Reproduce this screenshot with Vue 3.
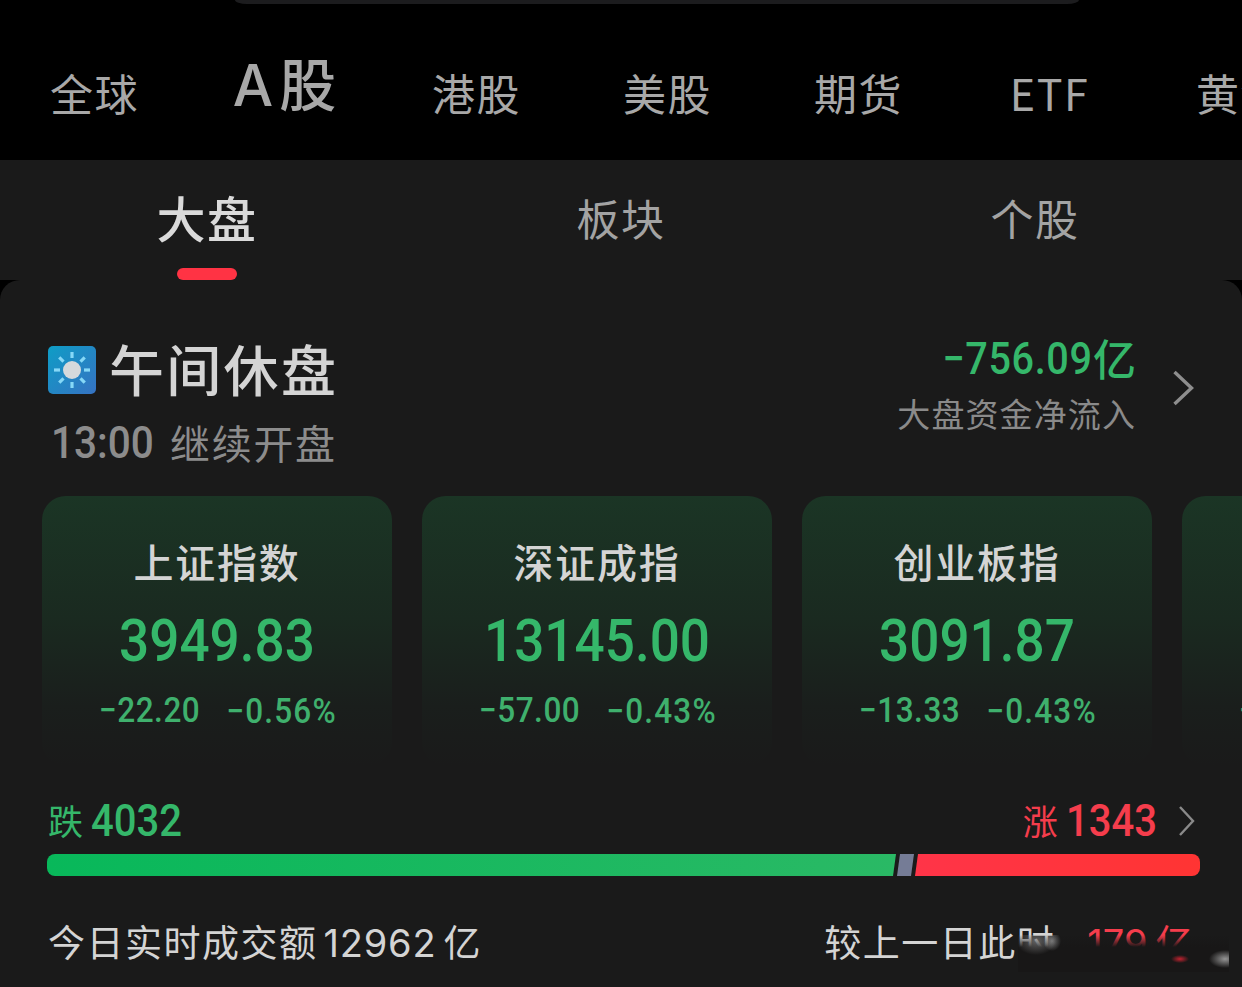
<script setup>
import { ref } from 'vue'

const markets = ['全球', 'A股', '港股', '美股', '期货', 'ETF', '黄金']
const activeMarket = ref('A股')

const sections = ['大盘', '板块', '个股']
const activeSection = ref('大盘')

const indexes = [
  { name: '上证指数', price: '3949.83', change: '−22.20', percent: '−0.56%' },
  { name: '深证成指', price: '13145.00', change: '−57.00', percent: '−0.43%' },
  { name: '创业板指', price: '3091.87', change: '−13.33', percent: '−0.43%' },
  { name: '', price: '', change: '−10.00', percent: '−0.70%' }
]

const rays = [0, 45, 90, 135, 180, 225, 270, 315]
</script>

<template>
  <div class="page">
    <div class="search-edge" />
    <nav class="markets">
      <a
        v-for="m in markets"
        :key="m"
        class="market"
        :class="{ active: m === activeMarket }"
        @click="activeMarket = m"
      >{{ m }}</a>
    </nav>

    <nav class="sections">
      <a
        v-for="s in sections"
        :key="s"
        class="section"
        :class="{ active: s === activeSection }"
        @click="activeSection = s"
      >{{ s }}</a>
    </nav>

    <div class="panel-wrap">
      <main class="panel">
        <header class="status">
          <div class="status-left">
            <div class="status-title">
              <svg class="sun" viewBox="0 0 48 48">
                <defs>
                  <linearGradient id="sky" x1="0" y1="0" x2="1" y2="1">
                    <stop offset="0" stop-color="#0e9dc6" />
                    <stop offset="1" stop-color="#3672c2" />
                  </linearGradient>
                </defs>
                <rect width="48" height="48" rx="5" fill="url(#sky)" />
                <circle cx="24" cy="24" r="9" fill="#d6d9dc" />
                <path
                  v-for="r in rays"
                  :key="r"
                  d="M24 6v6"
                  stroke="#86d8f7"
                  stroke-width="3.2"
                  :transform="`rotate(${r} 24 24)`"
                />
              </svg>
              <span>午间休盘</span>
            </div>
            <div class="status-sub">
              <span class="num time">13:00</span>
              <span class="resume">继续开盘</span>
            </div>
          </div>
          <div class="flow">
            <div class="flow-value"><span class="num">−756.09</span><span class="unit">亿</span></div>
            <div class="flow-label">大盘资金净流入</div>
          </div>
          <svg class="arrow" width="22" height="38" viewBox="0 0 22 38">
            <path d="M2.5 3l17 16-17 16" fill="none" stroke="#8e8e8e" stroke-width="3.4" />
          </svg>
        </header>

        <section class="cards">
          <article v-for="(item, i) in indexes" :key="i" class="card">
            <div class="card-name">{{ item.name }}</div>
            <div class="card-price num">{{ item.price }}</div>
            <div class="card-change num">
              <span>{{ item.change }}</span>
              <span class="percent">{{ item.percent }}</span>
            </div>
          </article>
        </section>

        <section class="breadth">
          <div class="counts">
            <span class="count down"><span class="label">跌</span><b class="num">4032</b></span>
            <span class="count up"><span class="label">涨</span><b class="num">1343</b></span>
            <svg class="count-arrow" width="18" height="32" viewBox="0 0 18 32">
              <path d="M2 2l13 14L2 30" fill="none" stroke="#8a8a8a" stroke-width="2.4" />
            </svg>
          </div>
          <div class="bar">
            <i class="bar-down" />
            <i class="bar-flat" />
            <i class="bar-up" />
          </div>
        </section>

        <footer class="turnover">
          <span>今日实时成交额<em>12962</em>亿</span>
          <span class="compare">较上一日此时<span class="diff"><em>179</em>亿</span><i class="smear" /></span>
        </footer>
      </main>
    </div>
  </div>
</template>

<style>
body {
  margin: 0;
  background: #000;
}
</style>

<style scoped>
.page {
  width: 1242px;
  height: 987px;
  overflow: hidden;
  background: #000;
  color: #d4d4d4;
  font-family: "Noto Sans CJK SC", sans-serif;
}

.num {
  font-family: Roboto, sans-serif;
  font-weight: 500;
}

.search-edge {
  width: 844px;
  height: 4px;
  margin-left: 235px;
  background: #1c1c1e;
  border-radius: 0 0 12px 12px / 0 0 4px 4px;
}

.markets {
  display: flex;
  height: 156px;
  padding-top: 58px;
  box-sizing: border-box;
}

.market {
  flex: 0 0 191px;
  font-size: 43px;
  line-height: 60px;
  letter-spacing: 1.5px;
  text-align: center;
  color: #a8a8a8;
}

.market:first-child {
  margin-left: -1px;
}

.market.active {
  margin-top: -6px;
  font-family: Inter, "Noto Sans CJK SC", sans-serif;
  font-size: 57px;
  font-weight: 500;
  letter-spacing: 6px;
  text-indent: 4px;
}

.sections {
  display: flex;
  height: 120px;
  padding-top: 27px;
  box-sizing: border-box;
  background: #1a1a1a;
}

.section {
  flex: 1;
  display: flex;
  flex-direction: column;
  align-items: center;
  font-size: 43px;
  line-height: 60px;
  letter-spacing: 1.5px;
  color: #a3a3a3;
}

.section.active {
  font-size: 49px;
  font-weight: 500;
  color: #dadada;
}

.section.active::after {
  content: "";
  width: 60px;
  height: 12px;
  margin-top: 21px;
  border-radius: 6px;
  background: #ff3344;
}

.panel {
  height: 707px;
  padding-top: 54px;
  box-sizing: border-box;
  border-radius: 20px 20px 0 0;
  background: #1a1a1a;
}

.status {
  display: flex;
  height: 130px;
  padding: 0 48px;
}

.status-title {
  display: flex;
  align-items: center;
  gap: 13px;
  height: 67px;
  font-size: 55px;
  line-height: 67px;
  font-weight: 500;
  letter-spacing: 2.3px;
}

.sun {
  width: 48px;
  height: 48px;
  margin-top: 5px;
}

.status-sub {
  display: flex;
  align-items: center;
  height: 44px;
  margin-top: 19px;
  color: #8c8c8c;
}

.time {
  width: 119px;
  margin-left: 3px;
  font-size: 45px;
  transform: scaleX(0.9);
  transform-origin: left;
}

.resume {
  font-size: 40px;
  line-height: 46px;
  letter-spacing: 1.7px;
}

.flow {
  margin-left: auto;
  text-align: right;
}

.flow-value {
  display: flex;
  justify-content: flex-end;
  height: 50px;
  line-height: 50px;
  color: #35b76a;
}

.flow-value .num {
  font-size: 45px;
  letter-spacing: 0.7px;
  transform: scaleX(0.88);
  transform-origin: right;
}

.flow-value .unit {
  font-size: 43px;
  line-height: 46px;
  font-weight: 500;
}

.flow-label {
  margin-top: 7px;
  font-size: 33px;
  line-height: 44px;
  letter-spacing: 1.1px;
  color: #8a8a8a;
}

.arrow {
  margin: 35px 0 0 36px;
}

.cards {
  display: flex;
  gap: 30px;
  margin: 32px 0 0 42px;
}

.card {
  flex: 0 0 350px;
  height: 270px;
  padding-top: 39px;
  box-sizing: border-box;
  border-radius: 24px;
  background: linear-gradient(180deg, #1b3525 0%, #1a2a20 45%, #1a1e1c 78%, #1a1a1a 100%);
  text-align: center;
}

.card-name {
  height: 50px;
  font-size: 40px;
  line-height: 52px;
  font-weight: 500;
  letter-spacing: 1.7px;
}

.card-price {
  height: 60px;
  margin-top: 26px;
  font-size: 60px;
  line-height: 60px;
  color: #35b76a;
  transform: scaleX(0.885);
}

.card-change {
  display: flex;
  justify-content: center;
  gap: 29px;
  height: 40px;
  margin-top: 19px;
  padding-left: 2px;
  font-size: 35px;
  line-height: 41px;
  letter-spacing: 0.6px;
  white-space: nowrap;
  color: #3fb06d;
  transform: scaleX(0.9);
}

.percent {
  padding-top: 1px;
  letter-spacing: 1.3px;
}

.breadth {
  margin: 30px 42px 0 47px;
}

.counts {
  display: flex;
  align-items: center;
  height: 50px;
}

.count {
  display: flex;
  align-items: center;
  font-size: 35px;
  line-height: 50px;
}

.label {
  line-height: 48px;
  margin-bottom: 2px;
}

.count .num {
  margin-left: 8px;
  font-size: 45px;
  transform: scaleX(0.89);
  transform-origin: left;
}

.down {
  margin-left: 1px;
  color: #35b76a;
}

.up {
  margin-left: auto;
  color: #f53d4c;
}

.count-arrow {
  margin: 0 4px 0 10px;
}

.bar {
  display: flex;
  height: 22px;
  margin-top: 8px;
}

.bar i {
  height: 22px;
}

.bar-down {
  width: 849px;
  border-radius: 8px 0 0 8px;
  background: linear-gradient(90deg, #08b85a, #2ab965);
  clip-path: polygon(0 0, 100% 0, calc(100% - 3px) 100%, 0 100%);
}

.bar-flat {
  width: 17px;
  margin-left: 1px;
  background: #757c96;
  clip-path: polygon(3px 0, 100% 0, calc(100% - 3px) 100%, 0 100%);
}

.bar-up {
  flex: 1;
  margin-left: 1px;
  border-radius: 0 8px 8px 0;
  background: linear-gradient(90deg, #ff3448, #ff3433);
  clip-path: polygon(3px 0, 100% 0, 100% 100%, 0 100%);
}

.turnover {
  display: flex;
  justify-content: space-between;
  height: 50px;
  margin: 40px 48px 0 48px;
  font-size: 37px;
  line-height: 50px;
  letter-spacing: 1.5px;
}

.turnover em {
  margin: 0 7px 0 6px;
  font-family: Inter, sans-serif;
  font-style: normal;
  font-size: 38px;
  letter-spacing: 0.8px;
}

.compare {
  position: relative;
  display: flex;
}

.diff {
  margin-left: 26px;
  color: #f53d4c;
}

.diff em {
  margin-right: 8px;
  letter-spacing: 0;
}

/* soft dark patch lying over the end of the comparison line */
.smear {
  position: absolute;
  left: 194px;
  top: 19px;
  width: 211px;
  height: 37px;
  background:
    radial-gradient(ellipse 20px 14px at 18px 6px, rgba(170, 170, 170, 0.5), transparent),
    radial-gradient(ellipse 9px 10px at 34px 6px, rgba(190, 190, 190, 0.55), transparent),
    radial-gradient(ellipse 16px 9px at 207px 24px, rgba(180, 180, 180, 0.8), transparent),
    radial-gradient(ellipse 9px 4px at 162px 24px, rgba(215, 35, 50, 0.9), transparent),
    linear-gradient(180deg, rgba(24, 23, 23, 0) 0, #181717 12px);
}
</style>
